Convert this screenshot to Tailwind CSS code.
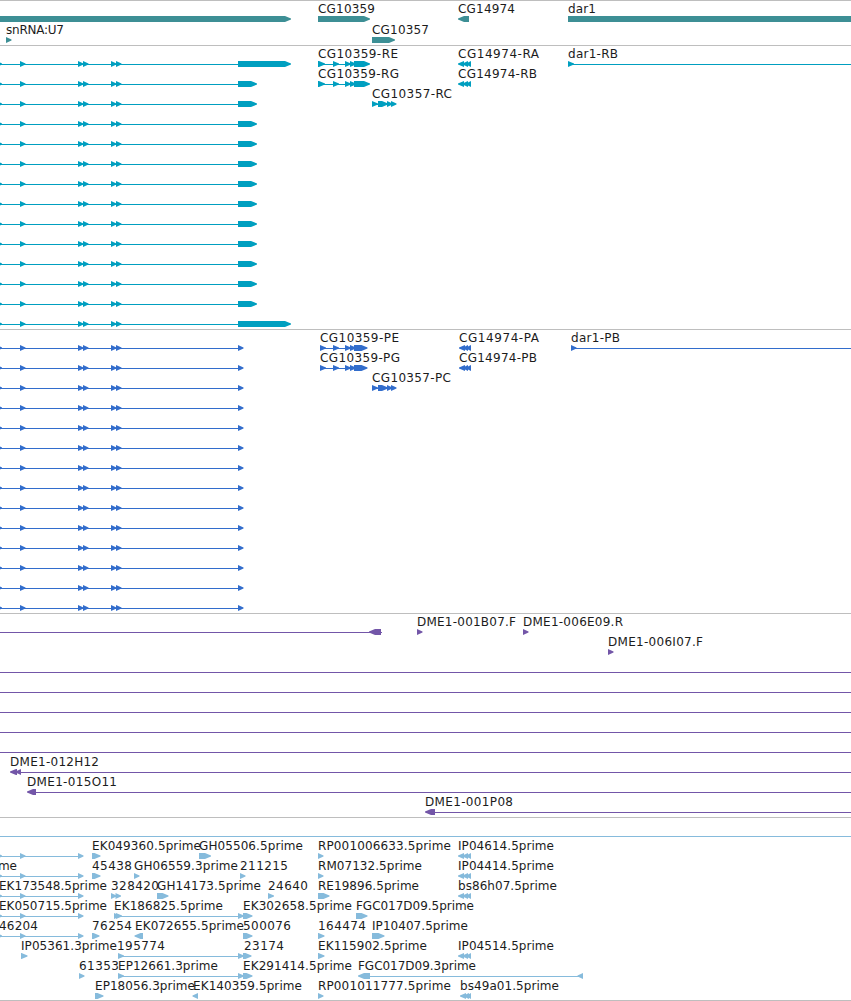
<!DOCTYPE html>
<html lang="en">

<head>
  <meta charset="UTF-8">
  <meta name="viewport" content="width=device-width, initial-scale=1.0">
  <title>Genome Browser</title>
  <script src="https://cdn.jsdelivr.net/npm/@tailwindcss/browser@4"></script>
</head>

<body class="bg-white">
  <main class="flex flex-col w-[851px] h-[1001px] overflow-hidden font-['DejaVu_Sans',sans-serif] text-[12px]">
    <section class="border-t border-[#bebebe] h-[45px]">
      <svg id="genes" class="block text-[#3d8f95]" width="851" height="44" viewBox="0 1 851 44"></svg>
    </section>
    <section class="border-t border-[#bebebe] h-[284px]">
      <svg id="transcripts" class="block text-[#009fc0]" width="851" height="283" viewBox="0 46 851 283"></svg>
    </section>
    <section class="border-t border-[#bebebe] h-[284px]">
      <svg id="proteins" class="block text-[#326dcc]" width="851" height="283" viewBox="0 330 851 283"></svg>
    </section>
    <section class="border-t border-[#bebebe] h-[204px]">
      <svg id="clones" class="block text-[#7356a8]" width="851" height="203" viewBox="0 614 851 203"></svg>
    </section>
    <section class="border-y border-[#bebebe] h-[184px]">
      <svg id="ests" class="block text-[#86bbdc]" width="851" height="182" viewBox="0 818 851 182"></svg>
    </section>
  </main>

  <script>
    const NS = 'http://www.w3.org/2000/svg';

    function add(track, tag, attrs, text) {
      const el = document.createElementNS(NS, tag);
      for (const key in attrs) el.setAttribute(key, attrs[key]);
      if (text) el.textContent = text;
      document.getElementById(track).appendChild(el);
    }

    function label(track, y, text, x1, x2) {
      add(track, 'text', { x: x1, y: y - 6, textLength: x2 - x1, fill: '#1c1c1c' }, text);
    }

    function line(track, y, x1, x2) {
      add(track, 'rect', { x: x1, y: y, width: x2 - x1, height: 1, fill: 'currentColor' });
    }

    // exon box, pointed at x2; when x2 < x1 it points left
    function exon(track, y, x1, x2) {
      const dir = x2 > x1 ? 1 : -1;
      const size = Math.abs(x2 - x1);
      const body = x2 - dir * Math.min(size, 6);
      add(track, 'polygon', {
        points: `${x1},${y - 3} ${body},${y - 3} ${x2},${y - 0.5} ${x2},${y + 0.5} ${body},${y + 3} ${x1},${y + 3}`,
        fill: 'currentColor'
      });
    }

    // feature: [y, label or null, exons, intron line or null]
    function feature(track, y, name, exons, intron) {
      if (intron) line(track, y, intron[0], intron[1]);
      exons.forEach(e => exon(track, y, e[0], e[1]));
      if (name) label(track, y, name[0], name[1], name[2]);
    }

    // genes
    feature('genes', 19, null, [[-10, 291]]);
    feature('genes', 19, ['CG10359', 318, 375], [[318, 370]]);
    feature('genes', 19, ['CG14974', 458, 515], [[469, 458]]);
    feature('genes', 19, ['dar1', 568, 596], [[568, 870]]);
    feature('genes', 40, ['snRNA:U7', 6, 64], [[6, 11.5]]);
    feature('genes', 40, ['CG10357', 372, 429], [[372, 395]]);

    // transcripts and proteins
    const common = [[-3.5, 2], [20, 25.5], [78, 83.5], [83, 88.5], [111, 116.5], [116, 121.5]];
    for (let i = 0; i < 14; i++) {
      const end = i === 0 || i === 13 ? 291 : 257;
      feature('transcripts', 64 + i * 20, null, common.concat([[238, end]]), [0, 240]);
      feature('proteins', 348 + i * 20, null, common.concat([[238, 243.5]]), [0, 240]);
    }

    const rc = [[372, 378], [378, 388], [387, 392.5], [391, 396.5]];
    const left = [[464, 458], [468, 462.5], [471, 466]];

    [['CG10359-RE', 398], ['CG10359-RG', 399]].forEach((n, i) =>
      feature('transcripts', 64 + i * 20, [n[0], 318, n[1]], [[318, 325], [333, 339], [345, 351], [350, 356], [354, 370]], [318, 360]));
    [['CG14974-RA', 539], ['CG14974-RB', 537]].forEach((n, i) =>
      feature('transcripts', 64 + i * 20, [n[0], 458, n[1]], left, [462, 471]));
    feature('transcripts', 104, ['CG10357-RC', 372, 452], rc, [372, 394]);
    feature('transcripts', 64, ['dar1-RB', 568, 618], [[568, 574]], [568, 851]);

    [['CG10359-PE', 399], ['CG10359-PG', 400]].forEach((n, i) =>
      feature('proteins', 348 + i * 20, [n[0], 320, n[1]], [[320, 326], [333, 339], [345, 351], [350, 356], [354, 367.5]], [320, 360]));
    [['CG14974-PA', 539], ['CG14974-PB', 537]].forEach((n, i) =>
      feature('proteins', 348 + i * 20, [n[0], 459, n[1]], [[465, 459], [468, 463], [471, 466]], [462, 471]));
    feature('proteins', 388, ['CG10357-PC', 372, 451], rc, [372, 394]);
    feature('proteins', 348, ['dar1-PB', 571, 620], [[571, 576.5]], [571, 851]);

    // clones
    feature('clones', 632, null, [[381, 369]], [0, 382]);
    feature('clones', 632, ['DME1-001B07.F', 417, 516], [[417, 422.5]]);
    feature('clones', 632, ['DME1-006E09.R', 523, 623], [[523, 528.5]]);
    feature('clones', 652, ['DME1-006I07.F', 608, 703], [[608, 613.5]]);
    [672, 692, 712, 732, 752].forEach(y => line('clones', y, 0, 851));
    feature('clones', 772, ['DME1-012H12', 10, 99], [[17, 10], [21, 15.5]], [14, 851]);
    feature('clones', 792, ['DME1-015O11', 27, 117], [[36, 27]], [30, 851]);
    feature('clones', 812, ['DME1-001P08', 425, 513], [[435, 425]], [430, 851]);

    // ESTs
    line('ests', 836, 0, 851);
    [856, 876, 896, 916, 936].forEach(y =>
      feature('ests', y, null, [[-3.5, 2], [20, 25.5], [78, 83.5]], [0, 80]));

    const ests = [
      [856, ['EK049360.5prime', 92, 201], [[92, 100.5]]],
      [856, ['GH05506.5prime', 199, 303], [[199, 211]]],
      [856, ['RP001006633.5prime', 318, 451], [[318, 323.5]]],
      [856, ['IP04614.5prime', 458, 554], left],
      [876, ['me', -2, 17], []],
      [876, ['45438', 92, 132], [[92, 100.5]]],
      [876, ['GH06559.3prime', 134, 238], [[134, 139.5]]],
      [876, ['211215', 240, 288], [[240, 245.5]]],
      [876, ['RM07132.5prime', 318, 422], [[318, 323.5]]],
      [876, ['IP04414.5prime', 458, 554], left],
      [896, ['EK173548.5prime', -1, 107], []],
      [896, ['328420', 111, 159], [[111, 116.5], [115.5, 121]], [111, 118]],
      [896, ['GH14173.5prime', 157, 261], [[157, 168.5]]],
      [896, ['24640', 268, 308], [[268, 274]]],
      [896, ['RE19896.5prime', 318, 419], [[318, 329.5]]],
      [896, ['bs86h07.5prime', 458, 557], left],
      [916, ['EK050715.5prime', -1, 107], []],
      [916, ['EK186825.5prime', 114, 223], [[114, 120], [116, 122], [238, 244], [243, 252.5]], [114, 250]],
      [916, ['EK302658.5prime', 243, 352], []],
      [916, ['FGC017D09.5prime', 356, 474], [[356, 367.5]]],
      [936, ['46204', -1, 38], []],
      [936, ['76254', 92, 132], [[92, 99.5]]],
      [936, ['EK072655.5prime', 135, 244], [[143, 134.5]]],
      [936, ['500076', 243, 291], [[243, 252.5]]],
      [936, ['164474', 318, 366], [[318, 324.5]]],
      [936, ['IP10407.5prime', 372, 468], [[372, 384.5]]],
      [956, ['IP05361.3prime', 21, 117], [[21, 27.5]]],
      [956, ['195774', 117, 165], [[118, 124], [238, 244], [243, 251.5]], [118, 250]],
      [956, ['23174', 244, 284], []],
      [956, ['EK115902.5prime', 318, 427], [[318, 324.5]]],
      [956, ['IP04514.5prime', 458, 554], left],
      [976, ['61353', 79, 119], [[79, 84.5]]],
      [976, ['EP12661.3prime', 118, 218], [[118, 124], [238, 244], [243, 252.5]], [118, 250]],
      [976, ['EK291414.5prime', 243, 352], []],
      [976, ['FGC017D09.3prime', 358, 476], [[370, 358], [583, 577.5]], [362, 582]],
      [996, ['EP18056.3prime', 95, 195], [[95, 103.5]]],
      [996, ['EK140359.5prime', 193, 302], [[198, 192.5]]],
      [996, ['RP001011777.5prime', 318, 451], [[318, 323.5]]],
      [996, ['bs49a01.5prime', 460, 559], [[466, 460], [469, 463.5], [471, 466.5]]]
    ];
    ests.forEach(([y, name, exons, intron]) => feature('ests', y, name, exons, intron));
  </script>
</body>
</html>
